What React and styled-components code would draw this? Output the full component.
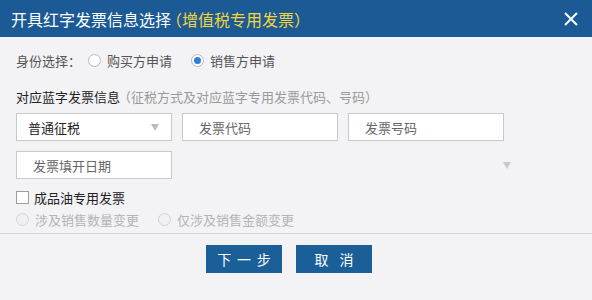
import React, { useState } from "react";
import styled, { createGlobalStyle } from "styled-components";

const GlobalStyle = createGlobalStyle`
  html, body {
    margin: 0;
    padding: 0;
    background: #f3f2f5;
  }
  body {
    font-family: "Noto Sans CJK SC", "Noto Sans", sans-serif;
    font-size: 13px;
    color: #333;
  }
`;

const App = () => {
  const [role, setRole] = useState("seller");
  const [oil, setOil] = useState(false);

  return (
    <>
      <GlobalStyle />
      <Dialog>
        <Header>
          <Title>
            开具红字发票信息选择<TitleTag>（增值税专用发票）</TitleTag>
          </Title>
          <CloseButton aria-label="关闭">
            <svg width="14" height="14" viewBox="0 0 14 14">
              <path d="M1 1 L13 13 M13 1 L1 13" stroke="#fff" strokeWidth="2" />
            </svg>
          </CloseButton>
        </Header>

        <Body>
          <IdentityRow>
            <FieldLabel>身份选择：</FieldLabel>
            <RadioOption onClick={() => setRole("buyer")}>
              <Radio $checked={role === "buyer"} />
              购买方申请
            </RadioOption>
            <RadioOption onClick={() => setRole("seller")}>
              <Radio $checked={role === "seller"} />
              销售方申请
            </RadioOption>
          </IdentityRow>

          <SectionTitle>
            对应蓝字发票信息<SectionHint>（征税方式及对应蓝字专用发票代码、号码）</SectionHint>
          </SectionTitle>

          <InputRow>
            <SelectBox>
              普通征税
              <Arrow />
            </SelectBox>
            <TextBox>发票代码</TextBox>
            <TextBox>发票号码</TextBox>
          </InputRow>

          <InputRow $gap>
            <TextBox>发票填开日期</TextBox>
            <GhostSelect>
              <Arrow $light />
            </GhostSelect>
          </InputRow>

          <CheckRow onClick={() => setOil(!oil)}>
            <Checkbox $checked={oil} />
            成品油专用发票
          </CheckRow>

          <DisabledRow>
            <RadioOption $disabled>
              <Radio $disabled />
              涉及销售数量变更
            </RadioOption>
            <RadioOption $disabled>
              <Radio $disabled />
              仅涉及销售金额变更
            </RadioOption>
          </DisabledRow>
        </Body>

        <Footer>
          <PrimaryButton $spacing={2.5}>下 一 步</PrimaryButton>
          <PrimaryButton $spacing={8}>取 消</PrimaryButton>
        </Footer>
      </Dialog>
    </>
  );
};

export default App;

const Dialog = styled.div`
  width: 592px;
  height: 300px;
  background: #f3f2f5;
  display: flex;
  flex-direction: column;
`;

const Header = styled.div`
  height: 37px;
  background: #1b5a94;
  display: flex;
  align-items: center;
  justify-content: space-between;
  padding: 0 14px 0 11px;
`;

const Title = styled.div`
  color: #fff;
  font-size: 16px;
`;

const TitleTag = styled.span`
  color: #f4d53c;
  margin-left: -5px;
`;

const CloseButton = styled.button`
  border: none;
  background: none;
  padding: 0;
  display: flex;
  cursor: pointer;
`;

const Body = styled.div`
  padding: 12px 16px 0;
  height: 197px;
  box-sizing: border-box;
  border-bottom: 1px solid #d6d6d8;
`;

const IdentityRow = styled.div`
  height: 22px;
  display: flex;
  align-items: center;
`;

const FieldLabel = styled.span`
  color: #555;
  margin-right: 7px;
`;

const RadioOption = styled.span`
  display: flex;
  align-items: center;
  gap: 6px;
  margin-right: 19px;
  color: ${(p) => (p.$disabled ? "#b4b4b4" : "#555")};
  cursor: ${(p) => (p.$disabled ? "default" : "pointer")};
`;

const Radio = styled.span`
  width: 13px;
  height: 13px;
  box-sizing: border-box;
  border-radius: 50%;
  border: 1px solid ${(p) => (p.$disabled ? "#d4d4d4" : "#b8b8b8")};
  background: ${(p) => (p.$disabled ? "#f0f0f2" : "#fff")};
  position: relative;

  &::after {
    content: "";
    display: ${(p) => (p.$checked ? "block" : "none")};
    position: absolute;
    top: 2px;
    left: 2px;
    width: 7px;
    height: 7px;
    border-radius: 50%;
    background: #2f7fd6;
  }
`;

const SectionTitle = styled.div`
  margin-top: 17px;
  height: 18px;
  line-height: 18px;
  color: #222;
`;

const SectionHint = styled.span`
  color: #9a9a9a;
  margin-left: -2px;
`;

const InputRow = styled.div`
  display: flex;
  gap: 10px;
  margin-top: ${(p) => (p.$gap ? "10px" : "7px")};
`;

const BoxBase = styled.div`
  width: 156px;
  height: 28px;
  box-sizing: border-box;
  border: 1px solid #c9c9c9;
  background: #fff;
  display: flex;
  align-items: center;
`;

const SelectBox = styled(BoxBase)`
  padding: 0 12px 0 11px;
  justify-content: space-between;
  color: #222;
`;

const TextBox = styled(BoxBase)`
  padding-left: 16px;
  color: #666;
`;

const GhostSelect = styled.div`
  margin-left: 166px;
  width: 175px;
  height: 28px;
  display: flex;
  align-items: center;
  justify-content: flex-end;
  padding-right: 12px;
  box-sizing: border-box;
`;

const Arrow = styled.span`
  width: 0;
  height: 0;
  border-left: 4px solid transparent;
  border-right: 4px solid transparent;
  border-top: 7px solid ${(p) => (p.$light ? "#c9c9cc" : "#bdbdbd")};
`;

const CheckRow = styled.div`
  margin-top: 9px;
  height: 18px;
  display: flex;
  align-items: center;
  gap: 5px;
  color: #222;
  cursor: pointer;
`;

const Checkbox = styled.span`
  width: 13px;
  height: 13px;
  box-sizing: border-box;
  border: 1px solid #9d9d9d;
  background: ${(p) => (p.$checked ? "#2f7fd6" : "#fff")};
`;

const DisabledRow = styled.div`
  margin-top: 4px;
  height: 18px;
  display: flex;
  align-items: center;
`;

const Footer = styled.div`
  display: flex;
  justify-content: center;
  gap: 14px;
  padding: 11px 14px 0 0;
`;

const PrimaryButton = styled.button`
  width: 76px;
  height: 28px;
  border: none;
  background: #1a5f98;
  color: #fff;
  font-family: "Noto Sans CJK SC", sans-serif;
  font-size: 14px;
  word-spacing: ${(p) => p.$spacing}px;
  white-space: pre;
  cursor: pointer;

  &:hover {
    background: #154e80;
  }
`;
